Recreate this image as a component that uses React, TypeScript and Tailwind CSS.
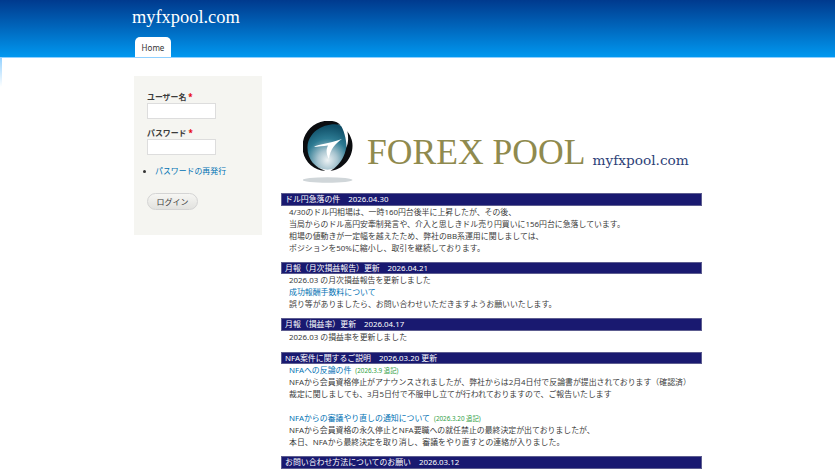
import type { ReactNode } from "react";

const sans = "font-['Noto_Sans','Noto_Sans_CJK_JP',sans-serif]";

type News = { title: string; gap: string; body: ReactNode };

function Note({ children }: { children: string }) {
  return <span className="ml-1 text-[6.3px] leading-none text-[#2ea043]">{children}</span>;
}

function A({ children }: { children: ReactNode }) {
  return <a className="text-[#0071b3]">{children}</a>;
}

const items: News[] = [
  {
    title: "ドル円急落の件　2026.04.30",
    gap: "mb-[8px]",
    body: (
      <>
        <p>4/30のドル円相場は、一時160円台後半に上昇したが、その後、</p>
        <p>当局からのドル高円安牽制発言や、介入と思しきドル売り円買いに156円台に急落しています。</p>
        <p>相場の値動きが一定幅を越えたため、弊社のBB系運用に関しましては、</p>
        <p>ポジションを50%に縮小し、取引を継続しております。</p>
      </>
    ),
  },
  {
    title: "月報（月次損益報告）更新　2026.04.21",
    gap: "mb-[8px]",
    body: (
      <>
        <p>2026.03 の月次損益報告を更新しました</p>
        <p><A>成功報酬手数料について</A></p>
        <p>誤り等がありましたら、お問い合わせいただきますようお願いいたします。</p>
      </>
    ),
  },
  {
    title: "月報（損益率）更新　2026.04.17",
    gap: "mb-[9px]",
    body: <p>2026.03 の損益率を更新しました</p>,
  },
  {
    title: "NFA案件に関するご説明　2026.03.20 更新",
    gap: "mb-[8px]",
    body: (
      <>
        <p className="h-[12px]"><A>NFAへの反論の件</A><Note>(2026.3.9 追記)</Note></p>
        <p>NFAから会員資格停止がアナウンスされましたが、弊社からは2月4日付で反論書が提出されております（確認済）</p>
        <p>裁定に関しましても、3月5日付で不服申し立てが行われておりますので、ご報告いたします</p>
        <p>&nbsp;</p>
        <p className="h-[12px]"><A>NFAからの審議やり直しの通知について</A><Note>(2026.3.20 追記)</Note></p>
        <p>NFAから会員資格の永久停止とNFA要職への就任禁止の最終決定が出ておりましたが、</p>
        <p>本日、NFAから最終決定を取り消し、審議をやり直すとの連絡が入りました。</p>
      </>
    ),
  },
  {
    title: "お問い合わせ方法についてのお願い　2026.03.12",
    gap: "",
    body: null,
  },
];

function Emblem() {
  return (
    <svg width="54" height="66" viewBox="0 0 54 66" className="mt-[6px] shrink-0">
      <defs>
        <radialGradient id="orb" cx="0.5" cy="0.8" r="0.72">
          <stop offset="0" stopColor="#eef3f5" />
          <stop offset="0.28" stopColor="#a9c5d0" />
          <stop offset="0.62" stopColor="#2c7a92" />
          <stop offset="1" stopColor="#0f4d66" />
        </radialGradient>
      </defs>
      <ellipse cx="24.5" cy="59" rx="25" ry="2.8" fill="#d0d6d9" />
      <g transform="translate(-1.5 -1.3)">
        <circle cx="26" cy="26" r="24" fill="url(#orb)" />
        <path d="M1 27C1 13 12 1 27 1 C32 1 36 2.5 39 5 C24 2 7 11 6 27 C5.5 39 13 48 24 51 C11 51 1 40 1 27Z" fill="#0b0d10" />
        <path d="M45 11C49 15 51 21 51 26 C51 39 41 50 29 51 C40 45 48 31 45 11Z" fill="#0b0d10" />
        <path d="M39 5 C43 7 45 9 46 12 C47 18 47 22 45 28 C45 18 42 10 39 5Z" fill="#fff" />
      </g>
      <path d="M11 26 C13 24.5 15 24 18 23.5 C26 22 33 20 39 18 C33 22 27 28 26 38 C23 33 23 28 25 24.5 C20 25 15 25.5 11 26Z" fill="#fff" />
    </svg>
  );
}

export default function App() {
  return (
    <div className={`${sans} relative h-[469px] w-[835px] overflow-hidden bg-white text-[7.9px] leading-[12px] text-[#3b3b3b]`}>
      <div className="absolute left-0 top-[57px] h-[30px] w-[2px] bg-gradient-to-b from-[#8fd0ff] to-white" />
      <header className="h-[57.5px] border-b border-[#8fd0ff] bg-gradient-to-b from-[#003a8e] to-[#0098f0]">
        <div className="ml-[132px] flex h-full flex-col">
          <div className="mt-[5px] h-[33px] font-['Liberation_Serif',serif] text-[18.4px] leading-[25px] text-white">myfxpool.com</div>
          <div className="relative ml-[3px] flex h-[20px] w-[36px] items-center justify-center rounded-t-[5px] bg-white pt-[2px] text-[8px] text-[#333]">Home</div>
        </div>
      </header>
      <div className="ml-[134px] mt-[18.5px] flex items-start gap-[19px]">
        <aside className="h-[159px] w-[128px] shrink-0 bg-[#f5f5f1] px-[13px] pt-[15px]">
          <label className="block font-bold">ユーザー名 <span className="text-red-600">*</span></label>
          <input className="block h-[16px] w-[69px] border border-[#ddd] bg-white" />
          <label className="mt-[8px] block font-bold">パスワード <span className="text-red-600">*</span></label>
          <input className="block h-[16px] w-[69px] border border-[#ddd] bg-white" />
          <ul className="mt-[10px] list-disc pl-[8px]">
            <li className="marker:text-[#333]"><A>パスワードの再発行</A></li>
          </ul>
          <button className="mt-[16px] h-[17px] w-[51px] rounded-full border border-[#d4d4d4] bg-gradient-to-b from-[#f6f6f3] to-[#e2e2df] text-center text-[8px] leading-[15px] text-[#3a3a3a]">ログイン</button>
        </aside>
        <main className="mt-[39px] w-[421px]">
          <div className="flex h-[78px] items-start pl-[22px]">
            <Emblem />
            <span className="ml-[10px] mt-[17px] whitespace-nowrap font-['Liberation_Serif',serif] text-[35.6px] leading-[40px] text-[#8f8a4e]">FOREX POOL</span>
            <span className="ml-[7px] mt-[35px] whitespace-nowrap font-['DejaVu_Serif',serif] text-[13.7px] leading-[20px] text-[#2d3f78]">myfxpool.com</span>
          </div>
          {items.map((n) => (
            <section key={n.title} className={n.gap}>
              <h2 className="h-[12.5px] border border-[#5d5d90] bg-[#191970] pl-[3px] text-[7.9px] font-normal leading-[10.5px] text-white">{n.title}</h2>
              <div className="whitespace-nowrap pl-[8px]">{n.body}</div>
            </section>
          ))}
        </main>
      </div>
    </div>
  );
}
